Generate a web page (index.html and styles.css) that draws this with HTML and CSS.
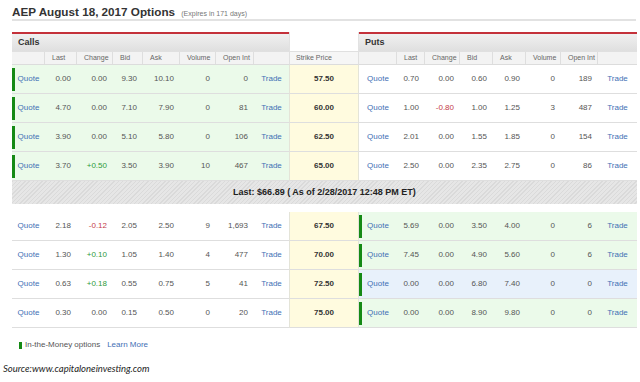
FILE: index.html
```html
<!DOCTYPE html>
<html>
<head>
<meta charset="utf-8">
<link rel="stylesheet" href="styles.css">
</head>
<body>
<div class="page">
  <div class="title">AEP August 18, 2017 Options <small>(Expires in 171 days)</small></div>
  <div class="chain">
    <div class="row">
      <div class="panel-head">Calls</div>
      <div class="strike blank"></div>
      <div class="panel-head">Puts</div>
    </div>
    <div class="row cols">
      <div class="side calls"><span></span><span>Last</span><span>Change</span><span>Bid</span><span>Ask</span><span>Volume</span><span>Open Int</span><span></span></div>
      <div class="strike">Strike Price</div>
      <div class="side puts"><span></span><span>Last</span><span>Change</span><span>Bid</span><span>Ask</span><span>Volume</span><span>Open Int</span><span></span></div>
    </div>

    <div class="row data">
      <div class="side calls itm"><a class="q">Quote</a><span>0.00</span><span>0.00</span><span>9.30</span><span>10.10</span><span>0</span><span>0</span><a class="t">Trade</a></div>
      <div class="strike">57.50</div>
      <div class="side puts"><a class="q">Quote</a><span>0.70</span><span>0.00</span><span>0.60</span><span>0.90</span><span>0</span><span>189</span><a class="t">Trade</a></div>
    </div>
    <div class="row data">
      <div class="side calls itm"><a class="q">Quote</a><span>4.70</span><span>0.00</span><span>7.10</span><span>7.90</span><span>0</span><span>81</span><a class="t">Trade</a></div>
      <div class="strike">60.00</div>
      <div class="side puts"><a class="q">Quote</a><span>1.00</span><span class="neg">-0.80</span><span>1.00</span><span>1.25</span><span>3</span><span>487</span><a class="t">Trade</a></div>
    </div>
    <div class="row data">
      <div class="side calls itm"><a class="q">Quote</a><span>3.90</span><span>0.00</span><span>5.10</span><span>5.80</span><span>0</span><span>106</span><a class="t">Trade</a></div>
      <div class="strike">62.50</div>
      <div class="side puts"><a class="q">Quote</a><span>2.01</span><span>0.00</span><span>1.55</span><span>1.85</span><span>0</span><span>154</span><a class="t">Trade</a></div>
    </div>
    <div class="row data">
      <div class="side calls itm"><a class="q">Quote</a><span>3.70</span><span class="pos">+0.50</span><span>3.50</span><span>3.90</span><span>10</span><span>467</span><a class="t">Trade</a></div>
      <div class="strike">65.00</div>
      <div class="side puts"><a class="q">Quote</a><span>2.50</span><span>0.00</span><span>2.35</span><span>2.75</span><span>0</span><span>86</span><a class="t">Trade</a></div>
    </div>

    <div class="last-bar">Last: $66.89 ( As of 2/28/2017 12:48 PM ET)</div>

    <div class="row data">
      <div class="side calls"><a class="q">Quote</a><span>2.18</span><span class="neg">-0.12</span><span>2.05</span><span>2.50</span><span>9</span><span>1,693</span><a class="t">Trade</a></div>
      <div class="strike">67.50</div>
      <div class="side puts itm"><a class="q">Quote</a><span>5.69</span><span>0.00</span><span>3.50</span><span>4.00</span><span>0</span><span>6</span><a class="t">Trade</a></div>
    </div>
    <div class="row data">
      <div class="side calls"><a class="q">Quote</a><span>1.30</span><span class="pos">+0.10</span><span>1.05</span><span>1.40</span><span>4</span><span>477</span><a class="t">Trade</a></div>
      <div class="strike">70.00</div>
      <div class="side puts itm"><a class="q">Quote</a><span>7.45</span><span>0.00</span><span>4.90</span><span>5.60</span><span>0</span><span>6</span><a class="t">Trade</a></div>
    </div>
    <div class="row data">
      <div class="side calls"><a class="q">Quote</a><span>0.63</span><span class="pos">+0.18</span><span>0.55</span><span>0.75</span><span>5</span><span>41</span><a class="t">Trade</a></div>
      <div class="strike">72.50</div>
      <div class="side puts itm hover"><a class="q">Quote</a><span>0.00</span><span>0.00</span><span>6.80</span><span>7.40</span><span>0</span><span>0</span><a class="t">Trade</a></div>
    </div>
    <div class="row data">
      <div class="side calls"><a class="q">Quote</a><span>0.30</span><span>0.00</span><span>0.15</span><span>0.50</span><span>0</span><span>20</span><a class="t">Trade</a></div>
      <div class="strike">75.00</div>
      <div class="side puts itm"><a class="q">Quote</a><span>0.00</span><span>0.00</span><span>8.90</span><span>9.80</span><span>0</span><span>0</span><a class="t">Trade</a></div>
    </div>
  </div>
  <div class="legend"><span class="mark"></span>In-the-Money options <a class="learn">Learn More</a></div>
</div>
<div class="source">Source:www.capitaloneinvesting.com</div>
</body>
</html>
```

FILE: styles.css
```css
* { box-sizing: border-box; margin: 0; padding: 0; }
body {
  font-family: "Liberation Sans", Arial, sans-serif;
  background: #fff;
  color: #555;
  width: 640px;
  height: 382px;
  overflow: hidden;
}
.page { padding-left: 12px; }
.title {
  width: 624px;
  height: 21px;
  padding-top: 5px;
  border-bottom: 2px solid #e2e2e2;
  font-size: 11.7px;
  line-height: 14px;
  font-weight: bold;
  color: #333;
  white-space: nowrap;
}
.title small {
  font-size: 7px;
  font-weight: normal;
  color: #777;
  margin-left: 3px;
}
.chain { margin-top: 11px; width: 625px; }
.row {
  display: grid;
  grid-template-columns: 277px 70px 278px;
}
.panel-head {
  height: 19px;
  border-top: 2px solid #c4313a;
  background: linear-gradient(#f0f0f0, #dfdfdf);
  font-size: 9px;
  font-weight: bold;
  color: #333;
  line-height: 17px;
  padding-left: 6px;
}
.strike.blank {
  background: #fff;
  border-left: 1px solid #e2e2e2;
  border-right: 1px solid #e2e2e2;
}
.side { display: grid; }
.calls { grid-template-columns: 33px 32px 36px 30px 37px 36px 38px 35px; }
.puts { grid-template-columns: 38px 28px 35px 33px 33px 35px 37px 39px; }

.cols .side, .cols .strike {
  height: 14px;
  background: #f3f3f3;
  border-top: 1px solid #e0e0e0;
  border-bottom: 1px solid #dcdcdc;
  font-size: 7px;
  line-height: 12px;
  color: #666;
}
.cols .side span {
  border-right: 1px solid #dedede;
  padding-left: 7px;
  white-space: nowrap;
}
.cols .side span:last-child { border-right: none; }
.cols .strike {
  padding-left: 6px;
  border-left: 1px solid #e0e0e0;
  border-right: 1px solid #e0e0e0;
  background: #f6f6f6;
}

.data .side, .data .strike {
  height: 29px;
  border-bottom: 1px solid #dedede;
  font-size: 8px;
  line-height: 28px;
}
.data .side span {
  text-align: right;
  padding-right: 6px;
  white-space: nowrap;
}
.data .strike {
  background: #fffbdf;
  border-left: 1px solid #e4e4d8;
  border-right: 1px solid #e4e4d8;
  text-align: center;
  font-weight: bold;
  color: #333;
}
.q, .t, .learn { color: #3f70b5; text-align: center; }
.itm { background-color: #ebfaea; }
.itm .q {
  background: linear-gradient(#158a15, #158a15) left center / 3px 23px no-repeat;
}
.hover { background-color: #e8f1fb; }
.neg { color: #c43c48; }
.pos { color: #2f9a3a; }

.last-bar {
  height: 23px;
  margin-bottom: 8px;
  background: repeating-linear-gradient(135deg, #dadada 0, #dadada 1px, #e6e6e6 1px, #e6e6e6 3px);
  font-size: 9px;
  font-weight: bold;
  color: #222;
  line-height: 23px;
  text-align: center;
}

.legend {
  margin-top: 11px;
  padding-left: 7px;
  font-size: 8px;
  line-height: 12px;
  color: #555;
  display: flex;
  align-items: center;
}
.legend .mark {
  width: 3px;
  height: 7px;
  background: #158a15;
  margin-right: 3px;
}
.learn { margin-left: 7px; }
.source {
  margin-top: 12px;
  padding-left: 3px;
  font-family: Lato, "Open Sans", sans-serif;
  font-style: italic;
  font-size: 9.5px;
  line-height: 12px;
  color: #222;
}
```
